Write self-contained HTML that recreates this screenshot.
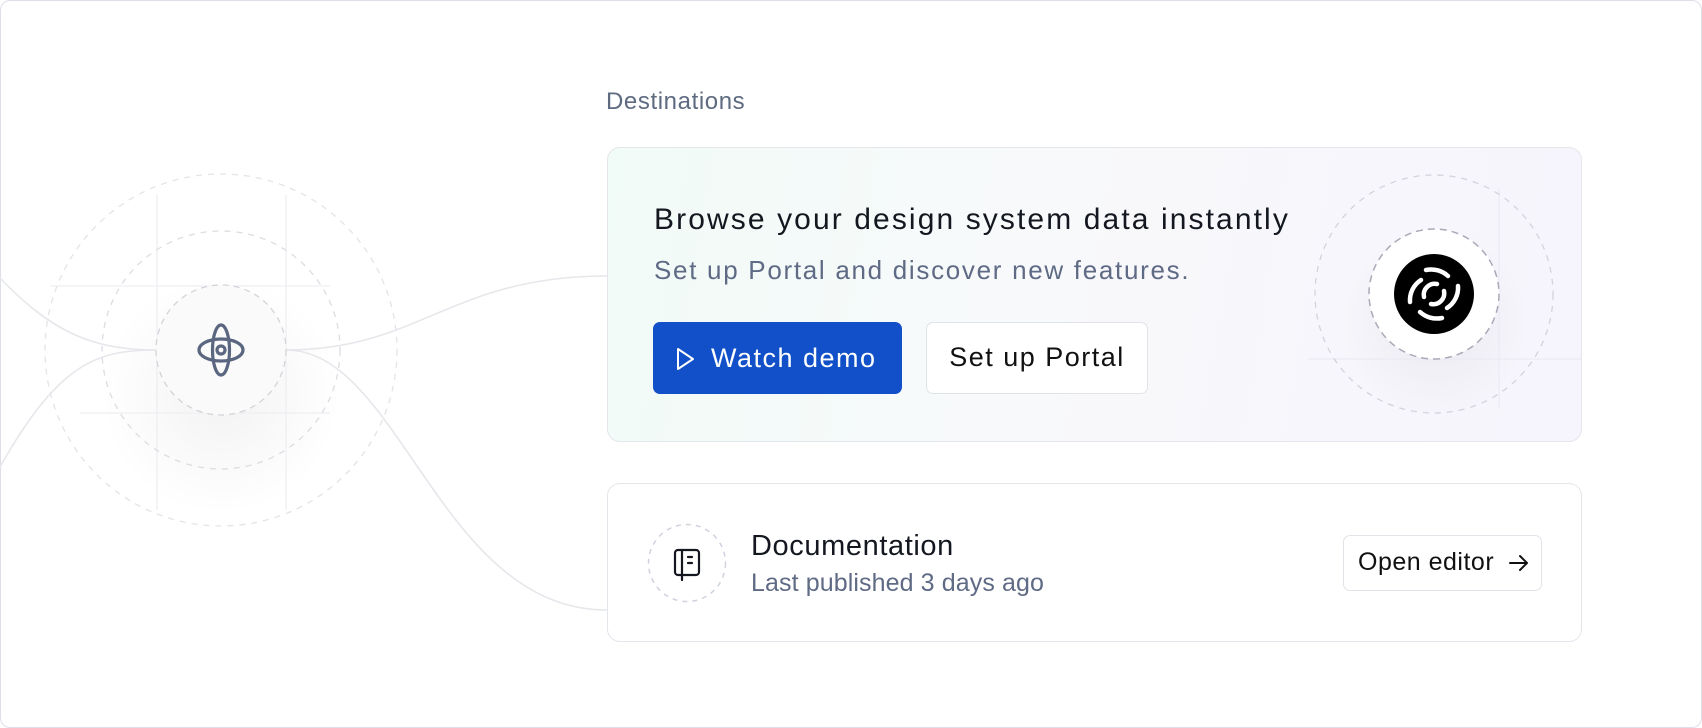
<!DOCTYPE html>
<html><head><meta charset="utf-8"><style>
*{margin:0;padding:0;box-sizing:border-box}
body{width:1702px;height:728px;background:#fff;font-family:"Liberation Sans",sans-serif;position:relative;overflow:hidden}
.frame{position:absolute;left:0;top:0;width:1702px;height:728px;border:1.5px solid #dde0e7;border-radius:10px}
.abs{position:absolute}
.card{position:absolute;border:1.5px solid #e3e6eb;border-radius:13px}
.t{position:absolute;white-space:nowrap}
</style></head><body>
<div class="frame"></div>
<svg class="abs" style="left:0;top:0" width="1702" height="728">
<defs>
<radialGradient id="sh" cx="50%" cy="50%" r="50%"><stop offset="0" stop-color="#000" stop-opacity=".05"/><stop offset="1" stop-color="#000" stop-opacity="0"/></radialGradient>
</defs>
<circle cx="221" cy="395" r="120" fill="url(#sh)"/>
<g stroke="#eeeff2" stroke-width="1.3" fill="none">
<line x1="157" y1="195" x2="157" y2="510"/><line x1="286" y1="195" x2="286" y2="510"/>
<line x1="50" y1="286" x2="330" y2="286"/><line x1="80" y1="413" x2="330" y2="413"/>
</g>
<g stroke="#e6e7eb" stroke-width="1.6" fill="none">
<path d="M0 278 C50 330 90 350 156 350"/>
<path d="M0 467 C60 360 100 350 156 350"/>
<path d="M286 350 C420 350 450 276 607 276"/>
<path d="M286 350 C400 350 440 610 607 610"/>
</g>
<g fill="none" stroke-dasharray="6 6" stroke-width="1.3">
<circle cx="221" cy="350" r="176" stroke="#e3e4e8"/>
<circle cx="221" cy="350" r="119" stroke="#dcdde2"/>
</g>
<circle cx="221" cy="350" r="65" fill="#fafafa" stroke="#d3d4d9" stroke-width="1.3" stroke-dasharray="6 5"/>
<g fill="none" stroke="#5b6680" stroke-width="3.2">
<ellipse cx="221" cy="350" rx="8.5" ry="25"/>
<ellipse cx="221" cy="350" rx="22" ry="11"/>
<circle cx="221" cy="350" r="4"/>
</g>
</svg>
<div class="t" style="left:606px;top:88px;font-size:24px;color:#5e6a80;letter-spacing:.6px">Destinations</div>
<div class="card" style="left:607px;top:147px;width:975px;height:295px;background:linear-gradient(100deg,#f1fbf7 0%,#f8f9fb 45%,#f6f4fc 100%);overflow:hidden">
<svg class="abs" style="left:0;top:0" width="975" height="295">
<circle cx="826" cy="175" r="95" fill="url(#sh)"/>
<g stroke="#ebe9f2" stroke-width="1.2"><line x1="891" y1="40" x2="891" y2="260"/><line x1="700" y1="211" x2="975" y2="211"/></g>
<circle cx="826" cy="146" r="119" fill="none" stroke="#d3d3dc" stroke-width="1.3" stroke-dasharray="6 6"/>
<circle cx="826" cy="146" r="65" fill="#fff" stroke="#a9aab8" stroke-width="1.5" stroke-dasharray="7 5"/>
<circle cx="826" cy="146" r="40" fill="#000"/>
<g transform="translate(826 146)" fill="none" stroke="#fff" stroke-width="4.5" stroke-linecap="round">
<g>
<path d="M-8 -24 A25 25 0 0 1 14 -18"/>
<path d="M24 -8 A24 24 0 0 1 13 14"/>
<path d="M-10 3 A11 11 0 0 1 3 -10"/>
</g>
<g transform="rotate(180)">
<path d="M-8 -24 A25 25 0 0 1 14 -18"/>
<path d="M24 -8 A24 24 0 0 1 13 14"/>
<path d="M-10 3 A11 11 0 0 1 3 -10"/>
</g>
</g>
</svg>
<div class="t" style="left:46px;top:55px;font-size:30px;color:#14171f;letter-spacing:2.1px">Browse your design system data instantly</div>
<div class="t" style="left:46px;top:107px;font-size:26px;color:#5f6a85;letter-spacing:1.7px">Set up Portal and discover new features.</div>
<div class="abs" style="left:45px;top:174px;width:249px;height:72px;background:#1150c8;border-radius:7px;color:#fff;font-size:27px;line-height:72px;padding-left:58px;letter-spacing:1.5px">
<svg class="abs" style="left:22px;top:25px" width="20" height="24"><path d="M3 2 L18 12 L3 22 Z" fill="none" stroke="#fff" stroke-width="2" stroke-linejoin="round"/></svg>Watch demo</div>
<div class="abs" style="left:318px;top:174px;width:222px;height:72px;background:#fff;border:1.5px solid #e0e3e8;border-radius:7px;color:#111;font-size:27px;line-height:69px;text-align:center;letter-spacing:1.5px">Set up Portal</div>
</div>
<div class="card" style="left:607px;top:483px;width:975px;height:159px;background:#fff">
<svg class="abs" style="left:39px;top:39px" width="80" height="80">
<circle cx="40" cy="40" r="38.5" fill="none" stroke="#cfd3de" stroke-width="1.5" stroke-dasharray="5 5"/>
<g fill="none" stroke="#14171f" stroke-width="2.2" stroke-linejoin="round" stroke-linecap="round">
<rect x="28" y="27" width="24" height="25" rx="3"/><line x1="35" y1="27" x2="35" y2="57"/><line x1="41" y1="34" x2="45" y2="34"/><line x1="41" y1="40" x2="45" y2="40"/>
</g>
</svg>
<div class="t" style="left:143px;top:46px;font-size:29px;color:#14171f;letter-spacing:.6px">Documentation</div>
<div class="t" style="left:143px;top:85px;font-size:25px;color:#5f6a85;letter-spacing:.1px">Last published 3 days ago</div>
<div class="abs" style="left:735px;top:51px;width:199px;height:56px;border:1.5px solid #e0e3e8;border-radius:7px;font-size:25px;color:#111;line-height:53px;padding-left:14px;letter-spacing:.5px">Open editor
<svg class="abs" style="left:164px;top:17px" width="22" height="20"><path d="M2 10 H19 M12 3 L19 10 L12 17" fill="none" stroke="#111" stroke-width="2" stroke-linecap="round" stroke-linejoin="round"/></svg></div>
</div>
</body></html>
